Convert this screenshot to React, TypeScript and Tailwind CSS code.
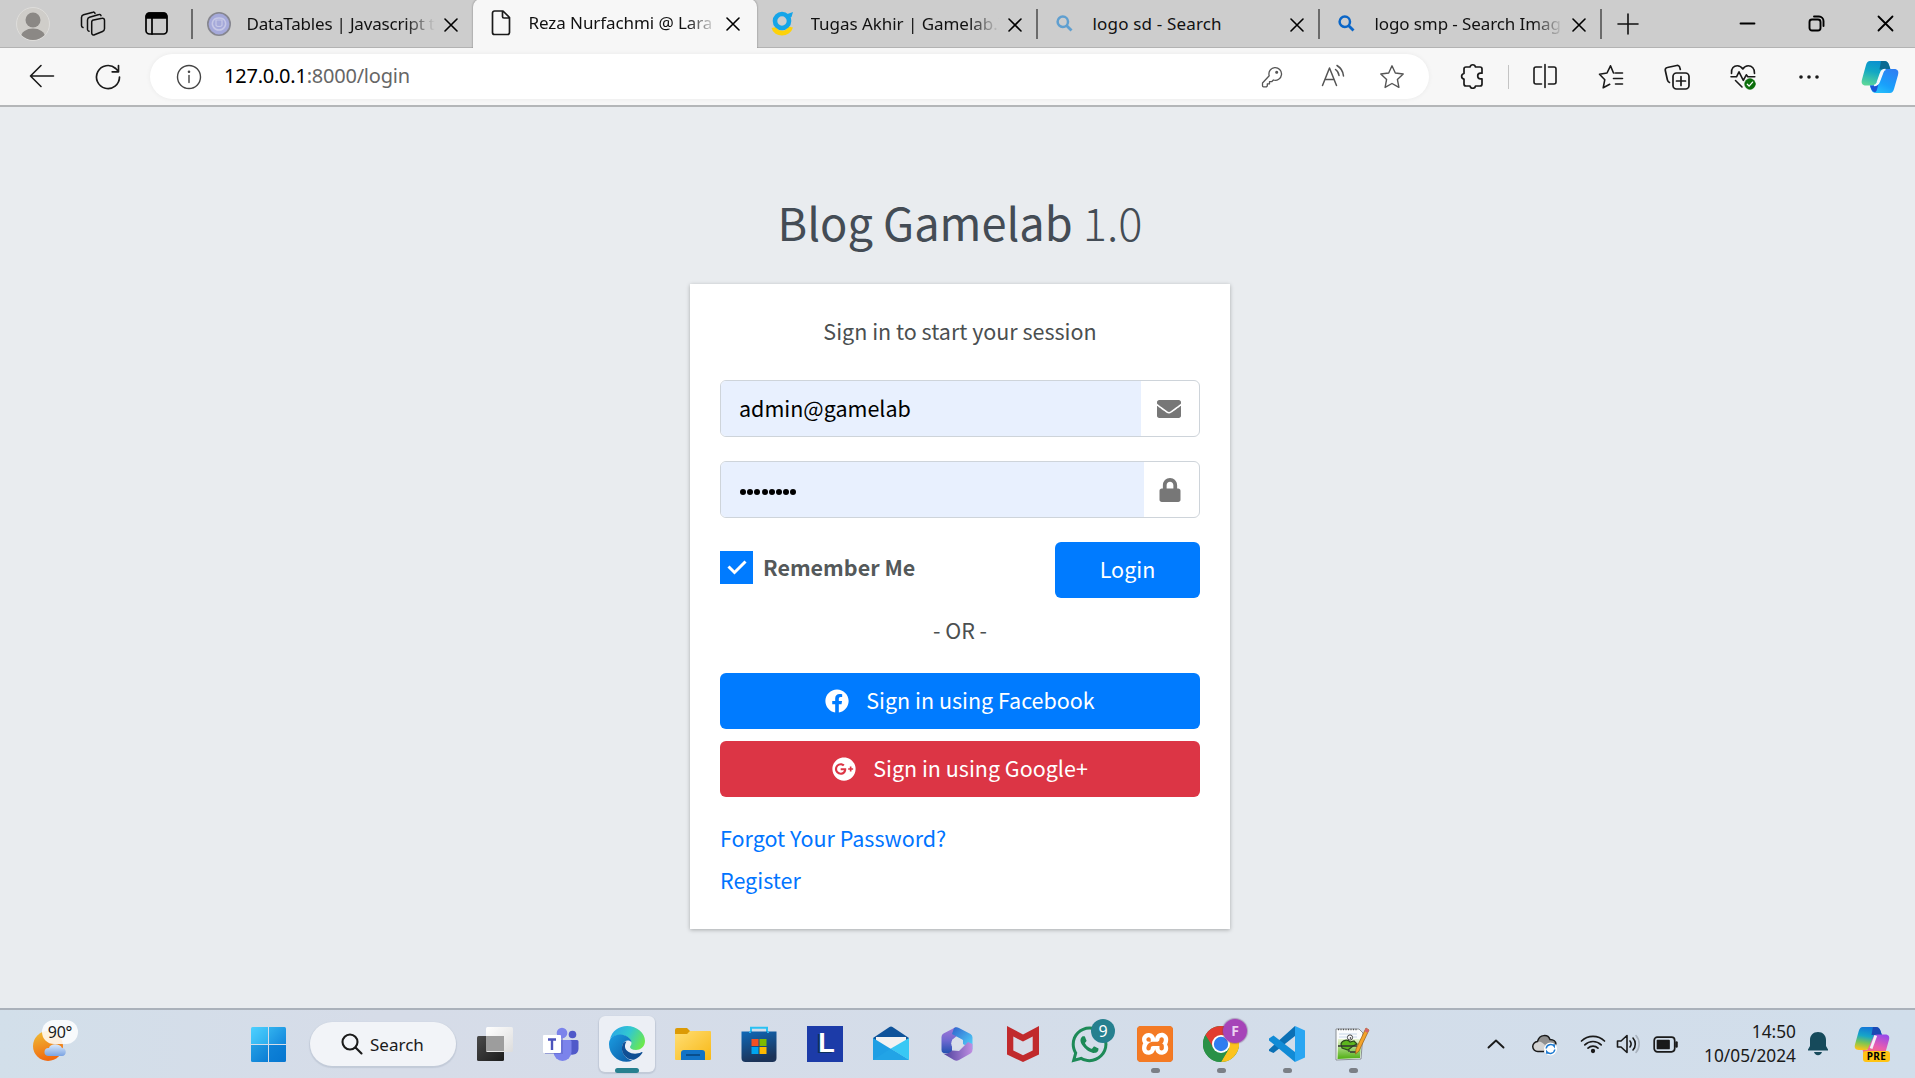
import React from "react";
import type { ReactNode } from "react";
import { FaEnvelope, FaFacebook, FaGooglePlus, FaLock, FaWhatsapp } from "react-icons/fa";
import { SiXampp } from "react-icons/si";

const UI = "font-['Noto_Sans','Open_Sans',sans-serif]";
const PAGE = "font-['Noto_Sans_CJK_SC','Noto_Sans',sans-serif]";

type SvgProps = { w: number; h: number; sw?: number; className?: string; children: ReactNode };

function Line({ w, h, sw = 1.5, className = "", children }: SvgProps) {
  return (
    <svg
      width={w}
      height={h}
      viewBox={`0 0 ${w} ${h}`}
      fill="none"
      stroke="currentColor"
      strokeWidth={sw}
      strokeLinecap="round"
      strokeLinejoin="round"
      className={`shrink-0 ${className}`}
    >
      {children}
    </svg>
  );
}

/* ---------- Tab strip ---------- */

function CloseX() {
  return (
    <Line w={14} h={14} sw={1.6} className="text-black">
      <path d="M1 1l12 12M13 1L1 13" />
    </Line>
  );
}

function DataTablesIcon() {
  return (
    <svg width="24" height="24" viewBox="0 0 24 24">
      <circle cx="12" cy="12" r="11.2" fill="#a5a9da" stroke="#86868f" strokeWidth="1.6" />
      <path d="M6 9c2-4 10-4 12 0s-1 9-6 9-8-5-6-9z" fill="none" stroke="#c6c8e6" strokeWidth="1.5" />
      <path d="M9 8h6v5c0 2-6 2-6 0z" fill="none" stroke="#c6c8e6" strokeWidth="1.2" />
    </svg>
  );
}

function DocIcon() {
  return (
    <Line w={20} h={26} sw={1.7} className="text-[#1a1a1a]">
      <path d="M4 1h8l6.500 6.500V22.500a2 2 0 0 1-2 2H3.500a2 2 0 0 1-2-2V3a2 2 0 0 1 2-2zM11.500 1.500V6.500a1.500 1.500 0 0 0 1.500 1.500h5" />
    </Line>
  );
}

function GamelabIcon() {
  return (
    <svg width="24" height="26" viewBox="0 0 24 26" fill="none">
      <path d="M3 16.500c1.500 7.500 14.500 7.500 16.500-.5" stroke="#fdd20a" strokeWidth="5" />
      <circle cx="11" cy="10" r="7" stroke="#16a5e8" strokeWidth="4.600" />
      <path d="M15 3.500l7-2.500-1.500 5-3 1.500z" fill="#16a5e8" />
    </svg>
  );
}

function Magnifier({ color }: { color: string }) {
  return (
    <svg width="17" height="17" viewBox="0 0 17 17" fill="none" stroke={color} strokeWidth="2.500">
      <circle cx="6.800" cy="6.800" r="5.200" />
      <path d="M10.500 10.500L15.500 15.500" strokeWidth="2.800" />
    </svg>
  );
}

type TabProps = { icon: ReactNode; title: string; tracking: string; fade?: boolean; active?: boolean; sep?: boolean };

function Tab({ icon, title, tracking, fade, active, sep }: TabProps) {
  return (
    <div
      className={
        active
          ? "relative z-10 -mx-px flex h-[49px] w-[284px] items-center rounded-t-[8px] bg-[#f7f7f7] pb-[1px] pl-[15px] shadow-[0_0_2px_rgba(0,0,0,0.45)] [clip-path:inset(-3px_-3px_0_-3px)]"
          : "relative flex h-[48px] w-[282px] items-center pl-[14px]"
      }
    >
      <div className="flex w-[26px] justify-center">{icon}</div>
      <div className="ml-[15px] w-[186px] whitespace-nowrap text-[17px] leading-[26px] text-[#111]">
        <span
          className={`${tracking} ${fade ? "block w-[188px] [mask-image:linear-gradient(to_right,#000_84%,transparent)]" : "block"}`}
        >
          {title}
        </span>
      </div>
      <div className="ml-[11px] mt-[2px]">
        <CloseX />
      </div>
      {sep && <div className="ml-auto h-[30px] w-[1.500px] bg-[#6b6b6b]" />}
    </div>
  );
}

function TabStrip() {
  return (
    <div className="flex h-[48px] items-center border-b border-[#b3b3b3] bg-[#cdcdcd]">
      <div className="flex w-[66px] justify-center">
        <svg width="34" height="34" viewBox="0 0 34 34">
          <clipPath id="avatar"><circle cx="17" cy="17" r="16" /></clipPath>
          <circle cx="17" cy="17" r="16.500" fill="#cfcdc9" stroke="#dedddb" />
          <circle cx="17" cy="13" r="7.500" fill="#8b8885" />
          <ellipse cx="17" cy="30" rx="12" ry="8.500" fill="#8b8885" clipPath="url(#avatar)" />
        </svg>
      </div>
      <div className="flex w-[54px] justify-center">
        <Line w={26} h={26} className="text-[#111]">
          <path d="M12.500 9.300l9.500-2a2 2 0 0 1 2.500 2v8.500a3 3 0 0 1-2 2.700l-8 3.300a2 2 0 0 1-2.800-2V11.500a2.300 2.300 0 0 1 .8-2.200z" />
          <path d="M7.500 18.500V9a3 3 0 0 1 2-2.800L19 3.500a1.500 1.500 0 0 1 2 1.200M7.500 18.500a2 2 0 0 0 1.500 1.800" />
          <path d="M1.500 14.500V6.500a3 3 0 0 1 2-2.800L13 1.200a1.500 1.500 0 0 1 2 1.200M1.500 14.500a2 2 0 0 0 1.500 2" />
        </Line>
      </div>
      <div className="flex w-[71px] justify-center">
        <Line w={23} h={23} sw={1.7} className="ml-[1px] text-black">
          <rect x="1" y="1" width="21" height="21" rx="3.500" />
          <path d="M1.500 6V4a3 3 0 0 1 3-3h14a3 3 0 0 1 3 3v2z" fill="currentColor" />
          <path d="M7 6v16" />
        </Line>
      </div>
      <div className="-mr-[1px] h-[30px] w-[1.500px] bg-[#6b6b6b]" />
      <Tab icon={<DataTablesIcon />} title="DataTables | Javascript t" tracking="tracking-[-0.200px]" fade />
      <Tab icon={<DocIcon />} title="Reza Nurfachmi @ Lara" tracking="tracking-[-0.080px]" fade active />
      <Tab icon={<GamelabIcon />} title="Tugas Akhir | Gamelab.I" tracking="tracking-[-0.040px]" fade sep />
      <Tab icon={<Magnifier color="#5f9fd0" />} title="logo sd - Search" tracking="tracking-[0.170px]" sep />
      <Tab icon={<Magnifier color="#0a66c8" />} title="logo smp - Search Imag" tracking="tracking-[-0.100px]" fade sep />
      <Line w={22} h={22} sw={1.6} className="ml-[15px] text-[#111]">
        <path d="M11 1v20M1 11h20" />
      </Line>
      <div className="ml-auto flex items-center pr-[21px] text-black">
        <Line w={17} h={17} sw={1.800}><path d="M1.500 8.500h14" /></Line>
        <Line w={17} h={17} sw={1.900} className="ml-[52px]">
          <rect x="1.500" y="4.500" width="11" height="11" rx="2.500" />
          <path d="M6 1.500h5a4.500 4.500 0 0 1 4.500 4.500v5" />
        </Line>
        <Line w={17} h={17} sw={1.800} className="ml-[52px]"><path d="M1.500 1.500l14 14M15.500 1.500l-14 14" /></Line>
      </div>
    </div>
  );
}

/* ---------- Address toolbar ---------- */

function Slot({ children }: { children: ReactNode }) {
  return <div className="flex w-[66px] shrink-0 justify-center">{children}</div>;
}

function CopilotIcon() {
  return (
    <svg width="38" height="34" viewBox="0 0 38 34">
      <defs>
        <linearGradient id="cpA" x1="0.600" y1="0" x2="0.300" y2="1">
          <stop offset="0" stopColor="#0a8fd0" />
          <stop offset="0.450" stopColor="#12a8c4" />
          <stop offset="1" stopColor="#5ad69a" />
        </linearGradient>
        <linearGradient id="cpB" x1="0.800" y1="0" x2="0.200" y2="1">
          <stop offset="0" stopColor="#2f7ff2" />
          <stop offset="0.600" stopColor="#19a0fb" />
          <stop offset="1" stopColor="#27c4fb" />
        </linearGradient>
      </defs>
      <path d="M9 1h14c3 0 4 1.500 5 4l1.500 4.500H22L17 22c-.8 2.500-2 3.500-5 3.500H5c-4 0-5-2.500-4-6L5 5c.8-2.600 2-4 4-4z" fill="url(#cpA)" />
      <path d="M20 1h3c3 0 4 1.500 5 4l1.500 4.500h-11z" fill="#0b6a92" />
      <path d="M29 33H15c-3 0-4-1.500-5-4l-1-3.500h5l6-13c.8-2.500 2-3.500 5-3.500h8c4 0 5 2.500 4 6L33 29c-.8 2.600-2 4-4 4z" fill="url(#cpB)" />
      <path d="M9 25.500h4c2.500 0 4-1 5-3.500l-2 7.500c-.7 2.300-1.500 3-3 2.500-2-.7-3-3-4-6.500z" fill="#1a56d6" />
      <path d="M24.500 9.500c-3 0-4.200 1-5 3.500L16 23c-.6 1.500-1.500 2.500-3 2.500 3.500 0 4.500-1.500 5.400-4L22 12c.5-1.500 1.200-2.500 2.500-2.500z" fill="#f4f8fb" stroke="#f4f8fb" strokeWidth="1.300" />
    </svg>
  );
}

function Toolbar() {
  return (
    <div className="flex h-[59px] items-center border-b-2 border-[#b4b6b8] bg-[#f7f7f7] pl-[9px] text-[#1a1a1a]">
      <Slot>
        <Line w={26} h={24} sw={1.600} className="-mt-[1px]"><path d="M1.500 12h23M12 1.500L1.500 12 12 22.500" /></Line>
      </Slot>
      <Slot>
        <Line w={26} h={26} sw={1.700}>
          <path d="M24.500 13a11.500 11.500 0 1 1-3.800-8.500L23.500 7.500M23.500 1.500v6.300h-6.300" />
        </Line>
      </Slot>
      <div className="ml-[9px] flex h-[45px] w-[1279px] items-center rounded-full bg-white pl-[26px] pr-[7px] shadow-[0_0_5px_rgba(0,0,0,0.06)]">
        <Line w={26} h={26} sw={1.400} className="text-[#444]">
          <circle cx="13" cy="13" r="11.500" />
          <path d="M13 11.500v7" />
          <circle cx="13" cy="7.800" r="0.600" fill="currentColor" />
        </Line>
        <div className="-mt-[1px] ml-[22px] text-[20px] leading-[30px] tracking-[-0.230px] text-[#666]">
          <span className="text-black">127.0.0.1</span>:8000/login
        </div>
        <div className="ml-auto flex items-center text-[#555]">
          <div className="flex w-[60px] justify-center">
            <Line w={22} h={22} sw={1.300}>
              <path d="M8.200 9.800a6.300 6.300 0 1 1 4.200 4.200l-1.700 1.700H8.500v2.200H6.300V20L5.500 20.800H2.500a1 1 0 0 1-1-1V17z" />
              <circle cx="15.700" cy="6.300" r="0.900" fill="currentColor" />
            </Line>
          </div>
          <div className="flex w-[60px] justify-center">
            <Line w={24} h={24} sw={1.500} className="-mt-[2px] ml-[1px]">
              <path d="M1.500 21.500L8.500 4l7 17.500M4 15.500h9" />
              <path d="M14.500 5.500a8.500 8.500 0 0 1 3.500 6M16 1.500a13.500 13.500 0 0 1 6.500 10.500" />
            </Line>
          </div>
          <div className="flex w-[60px] justify-center">
            <Line w={26} h={26} sw={1.400}>
              <path d="M13 1.800l3.300 7.200 7.900 1-5.800 5.400 1.500 8-6.900-3.900-6.900 3.900 1.500-8L1.800 10l7.900-1z" />
            </Line>
          </div>
        </div>
      </div>
      <div className="ml-[10px]">
        <Slot>
          <Line w={26} h={26} sw={1.700} className="-mt-[1px]">
            <path d="M7 4h4a2.800 2.800 0 0 1 5.500 0H21a2 2 0 0 1 2 2v4.200H21.500a2.800 2.800 0 0 0 0 5.600H23V21a2 2 0 0 1-2 2h-4.500a2.800 2.800 0 0 1-5.500 0H7a2 2 0 0 1-2-2v-4.800a2.900 2.900 0 0 1 0-5.700V6a2 2 0 0 1 2-2z" />
          </Line>
        </Slot>
      </div>
      <div className="mx-[3px] h-[24px] w-[1px] bg-[#c4c4c4]" />
      <Slot>
        <Line w={26} h={26} sw={1.600} className="-ml-[1px] -mt-[1px]">
          <path d="M9.500 4H4a2 2 0 0 0-2 2v13a2 2 0 0 0 2 2h5.500M16.500 4H22a2 2 0 0 1 2 2v13a2 2 0 0 1-2 2h-5.500M13 1.500v23" />
        </Line>
      </Slot>
      <Slot>
        <Line w={26} h={26} sw={1.600}>
          <path d="M16 9h-.5L12.500 1.800 9 9 1.500 10.200l5.300 5.500-1.600 8.100 6.500-3.500M17.500 9h7M15.500 14.500h9M17.500 20h7" />
        </Line>
      </Slot>
      <Slot>
        <Line w={26} h={26} sw={1.700}>
          <rect x="9" y="9" width="16" height="16" rx="3.500" />
          <path d="M17 12.500v9M12.500 17h9M5.500 18.500a3 3 0 0 1-2-2.300L1.300 6.500a2.500 2.500 0 0 1 2-3l9.500-2a2.500 2.500 0 0 1 3 2l.5 2" />
        </Line>
      </Slot>
      <Slot>
        <svg width="26" height="26" viewBox="0 0 26 26" fill="none" stroke="currentColor" strokeWidth="1.600" strokeLinecap="round" strokeLinejoin="round">
          <path d="M1.500 9.500C1 4 4 1.800 7.300 1.800c2.500 0 4.200 1.200 5.500 3.200 1.300-2 3-3.200 5.500-3.200 3.300 0 6.700 2.500 6.200 7.700" />
          <path d="M1 12.800h5.500l2.500-5 4.300 8.500 3-5.500 1.500 2h7M5.500 16.500l6.500 6.500" />
          <circle cx="20" cy="20" r="5.400" fill="#0b6e0b" stroke="#0b6e0b" strokeWidth="0.500" />
          <path d="M17.300 20.300l1.800 1.800 3.500-4" stroke="#fff" strokeWidth="1.300" />
        </svg>
      </Slot>
      <Slot>
        <svg width="22" height="6" viewBox="0 0 22 6" fill="currentColor">
          <circle cx="3" cy="3" r="1.800" /><circle cx="11" cy="3" r="1.800" /><circle cx="19" cy="3" r="1.800" />
        </svg>
      </Slot>
      <div className="ml-[19px]"><CopilotIcon /></div>
    </div>
  );
}

/* ---------- Login page ---------- */

function LoginPage() {
  return (
    <div className={`${PAGE} flex h-[901px] flex-col items-center bg-[#e9ecef] pl-[5px] text-[21.500px] leading-[36px] text-[#4b4f50]`}>
      <h1 className="mt-[77px] h-[76px] text-[45.200px] leading-[76px] text-[#444c55]">
        Blog Gamelab <span className="font-[250]">1.0</span>
      </h1>
      <div className="mt-[24px] flex h-[645px] w-[540px] flex-col bg-white px-[30px] shadow-[0_1px_4px_rgba(0,0,0,0.28)]">
        <p className="mt-[29px] text-center">Sign in to start your session</p>

        <div className="mt-[31px] flex h-[57px] overflow-hidden rounded-[6px] border border-[#ced4da]">
          <div className="flex w-[420px] items-center bg-[#e8f0fe] pb-[2px] pl-[18px] text-black">admin@gamelab</div>
          <FaEnvelope className="ml-[16px] mt-[16px] h-[24px] w-[24px] text-[#777]" />
        </div>

        <div className="mt-[24px] flex h-[57px] overflow-hidden rounded-[6px] border border-[#ced4da]">
          <div className="flex w-[423px] items-center gap-[1.200px] bg-[#e8f0fe] pl-[19px] pt-[4px]">
            {Array.from({ length: 8 }, (_, i) => (
              <span key={i} className="size-[6px] rounded-full bg-black" />
            ))}
          </div>
          <FaLock className="ml-[14px] mt-[16px] h-[24px] w-[24px] text-[#777]" />
        </div>

        <div className="mt-[24px] flex h-[56px] justify-between">
          <label className="mt-[9px] flex h-[33px] items-center gap-[10px] font-bold text-[#54595a]">
            <span className="flex size-[33px] items-center justify-center bg-[#007bff]">
              <svg width="20" height="15" viewBox="0 0 20 15" fill="none" stroke="#fff" strokeWidth="3">
                <path d="M1.500 6.500L7.500 12.500 18.500 1.500" />
              </svg>
            </span>
            <span className="-mt-[2px]">Remember Me</span>
          </label>
          <button className="h-[56px] w-[145px] rounded-[6px] bg-[#007bff] pb-[2px] text-white">Login</button>
        </div>

        <p className="mt-[14px] text-center">- OR -</p>

        <button className="mt-[25px] flex h-[56px] items-center justify-center rounded-[6px] bg-[#007bff] pb-[2px] text-white">
          <FaFacebook className="mr-[17px] mt-[1px] size-[24px]" />
          Sign in using Facebook
        </button>
        <button className="mt-[12px] flex h-[56px] items-center justify-center rounded-[6px] bg-[#dc3545] pb-[2px] text-white">
          <FaGooglePlus className="mr-[17px] mt-[1px] size-[24px]" />
          Sign in using Google+
        </button>

        <a className="mt-[23px] text-[#0074ff]">Forgot Your Password?</a>
        <a className="mt-[6px] text-[#0074ff]">Register</a>
      </div>
    </div>
  );
}

/* ---------- Taskbar ---------- */

function App36({ children, running, badge }: { children: ReactNode; running?: boolean; badge?: ReactNode }) {
  return (
    <div className="relative flex h-[68px] w-[66px] shrink-0 items-center justify-center">
      {children}
      {badge}
      {running && <div className="absolute bottom-[5px] left-[29px] h-[5px] w-[9px] rounded-full bg-[#7b7f86]" />}
    </div>
  );
}

function Pic({ children }: { children: ReactNode }) {
  return <svg width="36" height="36" viewBox="0 0 36 36">{children}</svg>;
}

function Gradient({ id, from, to, x2 = 1, y2 = 1, mid }: { id: string; from: string; to: string; x2?: number; y2?: number; mid?: string }) {
  return (
    <linearGradient id={id} x1="0" y1="0" x2={x2} y2={y2}>
      <stop offset="0" stopColor={from} />
      {mid && <stop offset="0.500" stopColor={mid} />}
      <stop offset="1" stopColor={to} />
    </linearGradient>
  );
}

function Apps() {
  return (
    <>
      <App36>
        <Pic>
          <Gradient id="tv1" from="#4a4a4a" to="#1c1c1c" /><Gradient id="tv2" from="#ffffff" to="#dcdcdc" />
          <rect x="0" y="10" width="27" height="25" rx="1.500" fill="url(#tv1)" />
          <rect x="9" y="1" width="27" height="25" rx="1.500" fill="url(#tv2)" />
          <rect x="9" y="10" width="18" height="15" fill="#9d9d9d" />
        </Pic>
      </App36>
      <App36>
        <Pic>
          <circle cx="29.500" cy="8.500" r="3.800" fill="#5059c9" />
          <path d="M24 14h10a1.500 1.500 0 0 1 1.500 1.500V23a6 6 0 0 1-11.500 2z" fill="#5059c9" />
          <circle cx="19" cy="7" r="5.300" fill="#7b83eb" />
          <path d="M10.500 14H27a1.500 1.500 0 0 1 1.500 1.500V26a9 9 0 0 1-18 0z" fill="#7b83eb" />
          <rect x="2" y="12" width="18" height="16" fill="#5a62c3" opacity="0.500" />
          <rect x="0" y="9" width="18" height="18" rx="1" fill="#fff" />
          <path d="M5 13.500h8M9 13.500V24" stroke="#4b53bc" strokeWidth="2.400" fill="none" />
        </Pic>
      </App36>
      <App36
        badge={<div className="absolute bottom-[5px] left-[21px] h-[5px] w-[24px] rounded-full bg-[#26808f]" />}
      >
        <div className="flex size-[56px] items-center justify-center rounded-[6px] bg-[#eceff5] shadow-[0_1px_1px_1px_rgba(120,130,150,0.200)]">
          <Pic>
            <linearGradient id="ed1" x1="0" y1="0.200" x2="1" y2="0.600"><stop offset="0" stopColor="#2aa5e8" /><stop offset="0.500" stopColor="#32c8d0" /><stop offset="1" stopColor="#6be84e" /></linearGradient>
            <Gradient id="ed2" from="#1b9de2" to="#0c59a4" />
            <path d="M1 13C3 5 10 0 18 0c10 0 18 7 18 15 0 6-5 9-9 9-4 0-6-1.500-6-3 0-1 1.500-1.500 1.500-4 0-4-5-8-11-8-5 0-8.500 2-10.500 4z" fill="url(#ed1)" />
            <path d="M0 18c0-6 5-9.500 11-9.500 6 0 11.500 4 11.500 8C20 13 15 14.500 13.500 19c-2 7 3 14 10 15.500C13 39 0 31 0 18z" fill="url(#ed2)" />
            <path d="M14 17.500c-4 9 4 17.500 11.500 16 3.500-1.500 6-3.700 7.800-6.500.5-1-.3-1.300-1-.8-7 3.500-15.500.3-16.300-5.200-.2-2 .5-4 1.500-5.500-1.500 0-3 1-3.500 2z" fill="#104f94" />
          </Pic>
        </div>
      </App36>
      <App36>
        <Pic>
          <Gradient id="fx" from="#ffde74" to="#f8b816" />
          <path d="M0 4a2 2 0 0 1 2-2h10l3 3v4H0z" fill="#dc9a05" />
          <path d="M0 8h12l3-3h20a1 1 0 0 1 1 1v27a1 1 0 0 1-1 1H1a1 1 0 0 1-1-1z" fill="url(#fx)" />
          <path d="M6 34v-7a3 3 0 0 1 3-3h18a3 3 0 0 1 3 3v7z" fill="#1273c6" />
          <path d="M11 29h14" stroke="#0a4a86" strokeWidth="1.800" />
        </Pic>
      </App36>
      <App36>
        <Pic>
          <Gradient id="st" from="#0f68b8" to="#1c3358" x2={0.300} />
          <path d="M10 7V1.800h16V7" fill="none" stroke="#2bc1f3" strokeWidth="2" />
          <path d="M.500 5.500h35V32a4 4 0 0 1-4 4h-27a4 4 0 0 1-4-4z" fill="url(#st)" />
          <path d="M9 7V5.500M27 7V5.500" stroke="#2bc1f3" strokeWidth="1.800" />
          <rect x="10.500" y="13" width="7" height="7" fill="#f25022" /><rect x="18.500" y="13" width="7" height="7" fill="#7fba00" />
          <rect x="10.500" y="21" width="7" height="7" fill="#00a4ef" /><rect x="18.500" y="21" width="7" height="7" fill="#ffb900" />
        </Pic>
      </App36>
      <App36>
        <div className="flex size-[36px] items-center justify-center bg-[#1c3ba8] pb-[3px] pl-[3px] font-['Liberation_Sans'] text-[27px] font-bold leading-[36px] text-white [text-shadow:-2px_1px_0_#0c2f5c]">L</div>
      </App36>
      <App36>
        <Pic>
          <path d="M0 12L16.500 1a3 3 0 0 1 3 0L36 12v5H0z" fill="#0f539a" />
          <path d="M3 11h30v8L18 26 3 18z" fill="#f2f2f2" />
          <path d="M0 12l36 22H0z" fill="#1f9fe4" />
          <path d="M36 12v22L17.500 22.800z" fill="#39c8f4" />
          <path d="M0 34l17.500-11.200L36 34z" fill="#22a4e6" />
        </Pic>
      </App36>
      <App36>
        <Pic>
          <Gradient id="ma" from="#a678d8" to="#1d4fae" mid="#6f68d0" x2={0} />
          <Gradient id="mb" from="#2f62cc" to="#55dcff" />
          <Gradient id="mc" from="#4a3f9c" to="#c08fe2" x2={1} y2={0} />
          <path d="M2.500 11a4 4 0 0 1 2-3.500L17 1l3 7-7 6v14l-8.500-1A3 3 0 0 1 2.500 24z" fill="url(#ma)" />
          <path d="M15 2a5 5 0 0 1 5 0l11.500 6a4 4 0 0 1 2 3.500v12L24 18v-4l-11-6z" fill="url(#mb)" />
          <path d="M33.500 18v6a4 4 0 0 1-2 3.500L20 34a5 5 0 0 1-5 0L4 27.500c4 1 7-1 9-3l7 .5 9-9z" fill="url(#mc)" />
          <circle cx="18" cy="17.500" r="5.800" fill="#d9dfea" />
        </Pic>
      </App36>
      <App36>
        <Pic>
          <path d="M2 0l16 8.500L34 0v28.500L18 36 2 28.500z" fill="#c12a2c" />
          <path d="M8.300 10.500L18 15.500l9.700-5V24.500L18 29.300 8.300 24.500z" fill="#d7dce7" />
        </Pic>
      </App36>
      <App36
        badge={
          <div className="absolute left-[35px] top-[9px] flex size-[24px] items-center justify-center rounded-full bg-[#26808f] text-[16px] leading-[24px] text-white">9</div>
        }
      >
        <FaWhatsapp className="size-[41px] text-[#1d8a57]" />
      </App36>
      <App36 running>
        <div className="flex size-[36px] items-center justify-center overflow-hidden rounded-[4px] bg-[#e06d1e]">
          <div className="flex size-[32px] items-center justify-center bg-white">
            <SiXampp className="size-[36px] shrink-0 text-[#f47a24]" />
          </div>
        </div>
      </App36>
      <App36
        running
        badge={
          <div className="absolute left-[35px] top-[9px] flex size-[24px] items-center justify-center rounded-full bg-[#a644b8] text-[14px] font-bold leading-[24px] text-[#ecd3f2] shadow-[0_0_1px_1px_rgba(110,60,120,0.400)]">F</div>
        }
      >
        <Pic>
          <circle cx="18" cy="18" r="18" fill="#2a9147" />
          <path d="M18 18L2.400 9A18 18 0 0 1 33.600 9z" fill="#e23b30" />
          <path d="M18 9h15.600A18 18 0 0 1 18 36l8-13.500z" fill="#fcc31e" />
          <path d="M2.400 9L18 9v9l-7.500 4z" fill="#e23b30" />
          <path d="M2.400 9l7.800 13.500A9 9 0 0 0 26 22.500L18 36A18 18 0 0 1 2.400 9z" fill="#2a9147" />
          <circle cx="18" cy="18" r="9" fill="#fff" />
          <circle cx="18" cy="18" r="7.200" fill="#2f7df0" />
        </Pic>
      </App36>
      <App36 running>
        <Pic>
          <path d="M0 23.500L26 0v10L4.500 27 0 25z" fill="#0b70b5" />
          <path d="M0 12.500L4.500 9.500 26 26v10L0 14.500z" fill="#118bd6" />
          <path d="M26 0l10 4.500v27L26 36z" fill="#2aa6f2" />
        </Pic>
      </App36>
      <App36 running>
        <Pic>
          <Gradient id="np" from="#e8f5d0" to="#4fae12" x2={0} />
          <path d="M1 3h23l4 4-2 26-25 1z" fill="#fbfcfd" stroke="#8a8f94" strokeWidth="1" />
          <path d="M3 3.500h20" stroke="#555" strokeWidth="1.600" strokeDasharray="1 1.500" />
          <path d="M4 8h18M4 11h18" stroke="#b9cbe0" strokeWidth="0.800" />
          <path d="M3 13h23.500L25 32 2.500 33z" fill="url(#np)" />
          <path d="M6 18c1-4 7-5 9-2l4-1 3 3-4 2-5 4-6-2z" fill="#5cb51e" stroke="#2d4b1d" strokeWidth="1.200" />
          <circle cx="15" cy="11.500" r="2.600" fill="#fff" stroke="#333" strokeWidth="0.900" />
          <circle cx="15.500" cy="12" r="0.800" fill="#111" />
          <path d="M3 20h19M14 26v-2M15 26h7" stroke="#333" strokeWidth="1.300" />
          <path d="M31 2l3 2-10 21-3.500 3 .5-5z" fill="#f3a42c" stroke="#9a5b14" strokeWidth="0.700" />
          <path d="M31 2l3 2-1.500 3-3-2z" fill="#d4636c" />
        </Pic>
      </App36>
    </>
  );
}

function Taskbar() {
  return (
    <div className="flex h-[70px] items-center border-t-2 border-[#aab1ba] bg-linear-to-r from-[#d2dfea] via-[#d6dce8] via-20% to-[#d1deeb] text-[#1a1a1a]">
      <div className="relative ml-[33px] h-[48px] w-[48px]">
        <svg width="34" height="32" viewBox="0 0 34 32" className="mt-[11px]">
          <Gradient id="sun" from="#eec037" to="#f26a10" x2={0.300} />
          <Gradient id="cloud" from="#dceafc" to="#7aa3e2" x2={0} />
          <circle cx="15" cy="15" r="15" fill="url(#sun)" />
          <path d="M15 25a4 4 0 0 1 1-8c1-5 11-5 13 0 5 0 5 8 0 8z" fill="url(#cloud)" />
        </svg>
        <div className="absolute left-[9px] top-0 flex h-[24px] w-[36px] items-center justify-center rounded-full bg-white/85 pb-[1px] text-[16px] tracking-[-0.300px]">90°</div>
      </div>
      <div className="ml-[170px] grid grid-cols-2 gap-[1px]">
        <div className="size-[17px] rounded-tl-[1.500px] bg-linear-to-br from-[#4dd0ff] to-[#2caeee]" />
        <div className="size-[17px] rounded-tr-[1.500px] bg-linear-to-br from-[#32b2ee] to-[#1287dc]" />
        <div className="size-[17px] rounded-bl-[1.500px] bg-linear-to-br from-[#239fe4] to-[#0b7cd4]" />
        <div className="size-[17px] rounded-br-[1.500px] bg-linear-to-br from-[#0f83d8] to-[#0676d0]" />
      </div>
      <div className="ml-[24px] flex h-[44px] w-[146px] items-center rounded-full bg-[#f2f4f8] pl-[31px] shadow-[0_1px_1px_1px_rgba(120,135,155,0.200)]">
        <Line w={22} h={22} sw={2.100} className="-mt-[1px]">
          <circle cx="9" cy="9" r="7.500" /><path d="M14.500 14.500l6 6" />
        </Line>
        <span className="ml-[7px] mt-[1px] text-[17px]">Search</span>
      </div>
      <div className="ml-[6px] flex">
        <Apps />
      </div>
      <div className="ml-auto flex items-center pr-[24px]">
        <Line w={18} h={10} sw={1.900}><path d="M1.500 8.500L9 1.500l7.500 7" /></Line>
        <svg width="26" height="22" viewBox="0 0 26 22" className="ml-[27px] mt-[2px]">
          <path d="M6 17a5 5 0 0 1-.5-9.500C7 1 16 0 18 5.500c5 0 7 5 5 9L14 17z" fill="#8f8f8f" />
          <path d="M6 17.500a5 5 0 0 1 0-10C8 7 11 9 13 11l-1 6.500z" fill="#d3d3d3" />
          <path d="M12 17.500H6a5 5 0 0 1-.5-10C7.500 0 16 0 18 5.500c3.500 0 6 2 6 5" fill="none" stroke="#1a1a1a" strokeWidth="1.500" />
          <circle cx="18.500" cy="15" r="6.500" fill="#fff" />
          <path d="M14.200 14.500a4.500 4.500 0 0 1 8-2.200v-2M22.800 15.500a4.500 4.500 0 0 1-8 2.200v2" fill="none" stroke="#1b78d0" strokeWidth="1.500" />
        </svg>
        <Line w={26} h={20} sw={1.700} className="ml-[22px]">
          <path d="M1.500 7a16.500 16.500 0 0 1 23 0M4.800 10.800a11.800 11.800 0 0 1 16.400 0M8 14.200a7.200 7.200 0 0 1 10 0" />
          <circle cx="13" cy="17" r="1.300" fill="currentColor" />
        </Line>
        <Line w={26} h={20} sw={1.600} className="ml-[10px]">
          <path d="M1.500 7h3.500l6-5.500v17l-6-5.500H1.500z" />
          <path d="M14 7a5 5 0 0 1 0 6M17 4a9 9 0 0 1 0 12" />
          <path d="M20 1.500a13 13 0 0 1 0 17" stroke="#a9b2bd" />
        </Line>
        <Line w={26} h={17} sw={1.700} className="ml-[11px]">
          <rect x="1.200" y="1.200" width="20.500" height="14.600" rx="3.200" />
          <rect x="4.500" y="4.500" width="11.500" height="8" fill="currentColor" />
          <path d="M23.500 6.500v4" strokeWidth="2.500" />
        </Line>
        <div className="-mt-[1px] ml-[13px] w-[104px] text-right text-[17.300px] leading-[24px]">
          <div>14:50</div>
          <div>10/05/2024</div>
        </div>
        <svg width="20" height="24" viewBox="0 0 20 24" className="ml-[12px]" fill="#164a5b">
          <path d="M10 0c4.800 0 8 3.300 8 8v6l2 3.500v1H0v-1L2 14V8c0-4.700 3.200-8 8-8zM6 20h8c-.5 2-2 3.200-4 3.200S6.500 22 6 20z" />
        </svg>
        <div className="relative ml-[26px] h-[36px] w-[37px]">
          <svg width="36" height="32" viewBox="0 0 38 34">
            <linearGradient id="pA" x1="0.500" y1="0" x2="0.300" y2="1">
              <stop offset="0" stopColor="#1274d8" /><stop offset="0.400" stopColor="#17a6c8" /><stop offset="0.700" stopColor="#7cc653" /><stop offset="1" stopColor="#fcc419" />
            </linearGradient>
            <linearGradient id="pB" x1="0.700" y1="0" x2="0.300" y2="1">
              <stop offset="0" stopColor="#9a4ae8" /><stop offset="0.500" stopColor="#e85cb0" /><stop offset="1" stopColor="#ff7a66" />
            </linearGradient>
            <path d="M9 1h14c3 0 4 1.500 5 4l1.500 4.500H22L17 22c-.8 2.500-2 3.500-5 3.500H5c-4 0-5-2.500-4-6L5 5c.8-2.600 2-4 4-4z" fill="url(#pA)" />
            <path d="M20 1h3c3 0 4 1.500 5 4l1.500 4.500h-11z" fill="#1a48b4" />
            <path d="M29 33H15c-3 0-4-1.500-5-4l-1-3.500h5l6-13c.8-2.500 2-3.500 5-3.500h8c4 0 5 2.500 4 6L33 29c-.8 2.600-2 4-4 4z" fill="url(#pB)" />
            <path d="M23 10l-5 14" stroke="#f4f0f8" strokeWidth="3" />
          </svg>
          <div className="absolute bottom-0 left-[9px] flex h-[11px] w-[27px] items-center justify-center rounded-[3px] bg-[#ffc414] text-[10px] font-bold leading-[11px] tracking-[0.300px] text-black">PRE</div>
        </div>
      </div>
    </div>
  );
}

export default function App() {
  return (
    <div className={`${UI} h-[1078px] w-[1915px] overflow-hidden`}>
      <TabStrip />
      <Toolbar />
      <LoginPage />
      <Taskbar />
    </div>
  );
}
